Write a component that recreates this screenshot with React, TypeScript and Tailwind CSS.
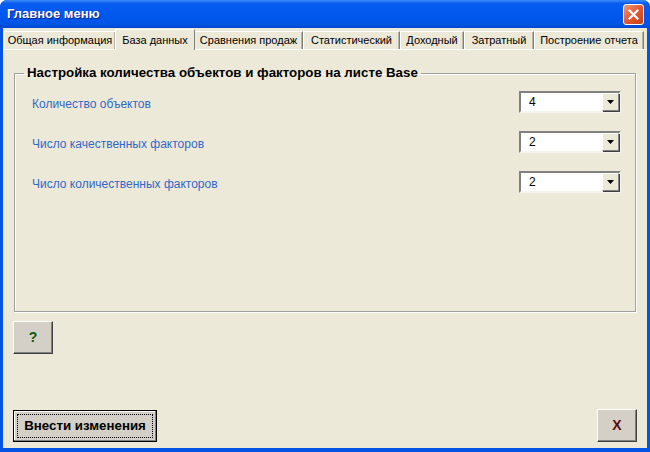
import React from "react";

const font = { fontFamily: '"Liberation Sans", Arial, sans-serif' };

const tabs = [
  { label: "Общая информация", w: "w-[112px]" },
  { label: "База данных", w: "w-[80px]", active: true },
  { label: "Сравнения продаж", w: "w-[109px]" },
  { label: "Статистический", w: "w-[97px]" },
  { label: "Доходный", w: "w-[64px]" },
  { label: "Затратный", w: "w-[70px]" },
  { label: "Построение отчета", w: "w-[110px]" },
];

const rows = [
  { label: "Количество объектов", value: "4" },
  { label: "Число качественных факторов", value: "2" },
  { label: "Число количественных факторов", value: "2" },
];

function Combo({ value }: { value: string }) {
  return (
    <div className="flex h-[22px] w-[102px] border-2 border-t-[#808080] border-l-[#808080] border-b-[#F4F3EE] border-r-[#F4F3EE] bg-white">
      <div className="flex flex-1 items-center pl-[8px] text-[12px] text-black">{value}</div>
      <div className="flex w-[17px] items-center justify-center border border-t-white border-l-white border-b-[#808080] border-r-[#808080] bg-[#ECE9D8] shadow-[1px_1px_0_#404040]">
        <svg width="7" height="4" viewBox="0 0 7 4">
          <path d="M0 0h7L3.5 4z" fill="#000" />
        </svg>
      </div>
    </div>
  );
}

export default function App() {
  return (
    <div
      className="flex h-[452px] w-[650px] flex-col overflow-hidden rounded-t-[7px] bg-[#0553E4]"
      style={font}
    >
      {/* title bar */}
      <div className="flex h-[28px] items-center justify-between bg-[linear-gradient(to_bottom,#3B8CF8,#0A5CF0_12%,#0058EE_50%,#0055E5_85%,#0246D0)] pl-[7px] pr-[6px]">
        <span className="text-[13px] font-bold text-white [text-shadow:1px_1px_0_#0A1E8A]">
          Главное меню
        </span>
        <div className="flex h-[21px] w-[21px] items-center justify-center rounded-[3px] border border-white bg-[linear-gradient(135deg,#F09A7A,#E2592F_50%,#C7401B)]">
          <svg width="11" height="11" viewBox="0 0 11 11">
            <path d="M1.5 1.5l8 8M9.5 1.5l-8 8" stroke="#fff" strokeWidth="2.2" strokeLinecap="square" />
          </svg>
        </div>
      </div>

      {/* client */}
      <div className="mx-[3px] mb-[4px] flex flex-1 flex-col bg-[#ECE9D8]">
        <div className="flex h-[21px] items-end pl-[1px] pt-[1px]">
          {tabs.map((t) =>
            t.active ? (
              <div
                key={t.label}
                className={`${t.w} relative z-10 -mx-[1px] -mb-[1px] flex h-[21px] shrink-0 items-start justify-center whitespace-nowrap border border-b-0 border-t-white border-l-white border-r-[#808080] bg-[#ECE9D8] pt-[2px] text-[11px] text-black`}
              >
                {t.label}
              </div>
            ) : (
              <div
                key={t.label}
                className={`${t.w} flex h-[18px] shrink-0 items-center justify-center whitespace-nowrap border border-b-0 border-t-white border-l-white border-r-[#808080] bg-[#ECE9D8] text-[11px] text-black shadow-[inset_-1px_0_0_#B8B5A8]`}
              >
                {t.label}
              </div>
            )
          )}
        </div>

        <div className="flex flex-1 flex-col border-t border-white">
          <fieldset className="ml-[11px] mt-[15px] h-[247px] w-[622px] border border-[#A0A0A0] pl-[17px] pr-[14px] pt-[10px] shadow-[1px_1px_0_#fff,inset_1px_1px_0_#fff]">
            <legend className="-ml-[8px] whitespace-nowrap px-[3px] text-[13.3px] font-bold leading-[16px] text-black">
              Настройка количества объектов и факторов на листе Base
            </legend>
            <div className="flex flex-col gap-[18px]">
              {rows.map((r) => (
                <div key={r.label} className="flex items-center justify-between">
                  <span className="pt-[3px] text-[12px] text-[#3168C8]">{r.label}</span>
                  <Combo value={r.value} />
                </div>
              ))}
            </div>
          </fieldset>

          <button className="ml-[10px] mt-[9px] flex h-[33px] w-[40px] items-center justify-center border border-t-white border-l-white border-b-[#404040] border-r-[#404040] bg-[#D4D0C8] shadow-[inset_-1px_-1px_0_#808080] text-[14px] font-bold text-[#0B5A0B]">
            ?
          </button>

          <div className="flex-1" />

          <div className="mb-[6px] flex items-end justify-between pl-[10px] pr-[10px]">
            <button className="flex h-[32px] w-[144px] items-center justify-center border border-black bg-[#D4D0C8] p-[3px] shadow-[inset_-1px_-1px_0_#808080,inset_1px_1px_0_#fff]">
              <span className="flex h-full w-full items-center justify-center whitespace-nowrap border border-dotted border-black text-[13.3px] font-bold text-black">
                Внести изменения
              </span>
            </button>
            <button className="flex h-[33px] w-[40px] items-center justify-center border border-t-white border-l-white border-b-[#404040] border-r-[#404040] bg-[#D4D0C8] shadow-[inset_-1px_-1px_0_#808080] text-[14px] font-bold text-[#5A0B0B]">
              X
            </button>
          </div>
        </div>
      </div>
    </div>
  );
}
